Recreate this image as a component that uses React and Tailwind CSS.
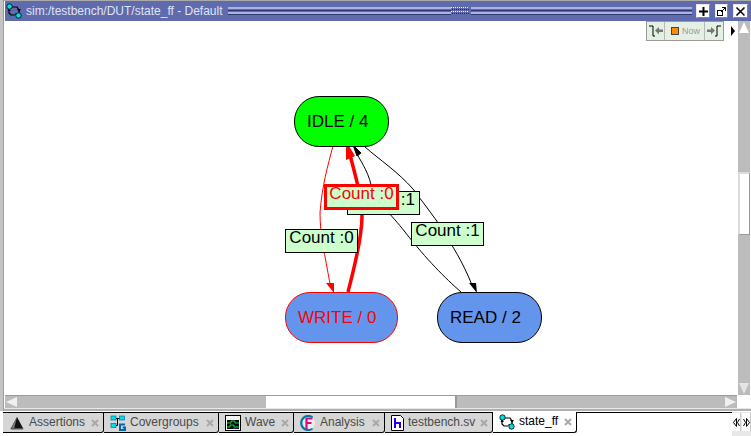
const F = { fontFamily: '"Liberation Sans", Arial, sans-serif' };

function StateIcon({ size = 16 }) {
  return (
    <svg width={size} height={size} viewBox="0 0 16 16" className="shrink-0">
      <path d="M5 4H11L13 7V11H9M3 6V10L5 12H9" fill="none" stroke="#000" strokeWidth="1.2" />
      <path d="M11 6L13 9L15 6ZM1.5 8L3 5.5L5 8Z" fill="#000" />
      <circle cx="3.5" cy="3.5" r="2.7" fill="#00e0e8" stroke="#000" strokeWidth="0.8" />
      <circle cx="12.5" cy="12.5" r="2.7" fill="#00e0e8" stroke="#000" strokeWidth="0.8" />
    </svg>
  );
}

function AssertIcon() {
  return (
    <svg width="16" height="16" viewBox="0 0 16 16" className="shrink-0">
      <path d="M8 2L14.5 14H1.5Z" fill="#111" />
      <path d="M8 2L5 14H1.5Z" fill="#777" />
      <path d="M2 13H14V14.5H2Z" fill="#555" />
    </svg>
  );
}

function CoverIcon() {
  return (
    <svg width="16" height="16" viewBox="0 0 16 16" className="shrink-0">
      <path d="M5 3.5H10M7.5 3.5V10.5H5" stroke="#000" fill="none" />
      <rect x="1" y="1" width="5" height="4" fill="#00e0e8" stroke="#0070a0" strokeWidth="0.7" />
      <rect x="9.5" y="1" width="5" height="4" fill="#00e0e8" stroke="#0070a0" strokeWidth="0.7" />
      <rect x="1" y="8.5" width="5" height="4" fill="#00e0e8" stroke="#0070a0" strokeWidth="0.7" />
      <path d="M15 9.5H10V15H15V12.5H12.7" fill="none" stroke="#0068a8" strokeWidth="2" />
    </svg>
  );
}

function WaveIcon() {
  return (
    <svg width="16" height="16" viewBox="0 0 16 16" className="shrink-0">
      <rect x="0.5" y="0.5" width="15" height="15" fill="#f4f4f4" stroke="#000" />
      <rect x="2" y="5" width="12" height="9" fill="#000" />
      <path d="M2 8H6V6H10V8H14" stroke="#00e050" fill="none" />
      <path d="M2 12H5V10H9V12H14" stroke="#00e050" fill="none" />
      <path d="M8 13H13" stroke="#4040ff" />
    </svg>
  );
}

function AnalysisIcon() {
  return (
    <svg width="16" height="16" viewBox="0 0 16 16" className="shrink-0">
      <path d="M12.5 2.5A7 7 0 1 0 12.5 13.5" fill="none" stroke="#0078a8" strokeWidth="2.2" />
      <circle cx="9" cy="8" r="6" fill="#fff" opacity="0.55" />
      <path d="M6.5 14V3.5H12.5M6.5 8H11.5" fill="none" stroke="#d0108a" strokeWidth="2.2" />
    </svg>
  );
}

function FileIcon() {
  return (
    <svg width="13" height="16" viewBox="0 0 13 16" className="shrink-0">
      <path d="M0.5 0.5H9.5L12.5 3.5V15.5H0.5Z" fill="#fff" stroke="#000" />
      <path d="M4 3V13M4 8H9V13" fill="none" stroke="#2000f0" strokeWidth="2" />
    </svg>
  );
}

function X() {
  return (
    <svg width="8" height="8" viewBox="0 0 8 8" className="shrink-0">
      <path d="M1 1L7 7M7 1L1 7" stroke="#a8a8a8" strokeWidth="2" />
    </svg>
  );
}

function WinBtn({ w, children }) {
  return (
    <div style={{ width: w }} className="h-[14px] bg-white border border-t-[#e8e8e8] border-l-[#e8e8e8] border-b-[#888] border-r-[#888] flex items-center justify-center shrink-0">
      {children}
    </div>
  );
}

function Grip({ className }) {
  return (
    <div className={"flex flex-col " + className}>
      <div className="h-[2px] bg-[#a9b3e8]" />
      <div className="h-px" />
      <div className="h-px bg-[#30386e]" />
      <div className="h-px" />
      <div className="h-[2px] bg-[#a9b3e8]" />
      <div className="h-px bg-[#30386e]" />
    </div>
  );
}

function Hatch() {
  const dots = [];
  for (let r = 0; r < 4; r++) {
    for (let c = 0; c < 9; c++) {
      dots.push(<rect key={r + "-" + c} x={c * 2 + (r % 2)} y={r * 2} width="1" height="1" fill={r % 2 ? "#20264e" : "#e8ecff"} />);
    }
  }
  return (
    <svg width="20" height="8" viewBox="0 0 20 8" className="shrink-0">{dots}</svg>
  );
}

function TitleBar() {
  return (
    <div className="h-[20px] mt-px ml-[5px] bg-[#5f6bac] flex items-center shrink-0">
      <div className="ml-[1px] mr-[4px]"><StateIcon /></div>
      <span className="text-[12px] leading-[18px] text-[#dfe3f5] whitespace-nowrap">sim:/testbench/DUT/state_ff - Default</span>
      <Grip className="ml-[5px] w-[223px] h-[8px]" />
      <Hatch />
      <Grip className="flex-1 h-[8px] mr-[4px]" />
      <div className="flex gap-[5px] mr-[3px] shrink-0">
        <WinBtn w={14}>
          <svg width="11" height="11" viewBox="0 0 11 11"><path d="M5.5 1V10M1 5.5H10" stroke="#000" strokeWidth="2" /></svg>
        </WinBtn>
        <WinBtn w={13}>
          <svg width="11" height="11" viewBox="0 0 11 11">
            <rect x="1.5" y="4.5" width="5" height="5" fill="none" stroke="#000" />
            <path d="M5 6L9.5 1.5M6 1.5H9.5V5" fill="none" stroke="#000" />
          </svg>
        </WinBtn>
        <WinBtn w={15}>
          <svg width="11" height="11" viewBox="0 0 11 11"><path d="M1.5 1.5L9.5 9.5M9.5 1.5L1.5 9.5" stroke="#000" strokeWidth="1.6" /></svg>
        </WinBtn>
      </div>
    </div>
  );
}

function Toolbar() {
  return (
    <div className="absolute top-[0px] right-[2px] flex items-center">
      <div className="flex h-[20px] w-[78px] border border-[#9a9a9a] bg-[#e4f0e4]">
        <div className="w-[18px] flex items-center justify-center border-r border-r-[#b8b8b8]">
          <svg width="16" height="14" viewBox="0 0 16 14">
            <path d="M1 2H5V12H7" fill="none" stroke="#000" />
            <path d="M7 6.5L11 3V5.5H15V8H11V10.5Z" fill="#777" />
          </svg>
        </div>
        <div className="flex-1 flex items-center pl-[6px] gap-[3px]">
          <div className="w-[6px] h-[6px] bg-[#ff8c00] border border-[#444] box-content" />
          <span className="text-[9px] leading-none text-[#9a9a9a]">Now</span>
        </div>
        <div className="w-[19px] flex items-center justify-center border-l border-l-[#b8b8b8]">
          <svg width="16" height="14" viewBox="0 0 16 14">
            <path d="M15 2H11V12H9" fill="none" stroke="#000" />
            <path d="M9 6.5L5 3V5.5H1V8H5V10.5Z" fill="#777" />
          </svg>
        </div>
      </div>
      <svg width="6" height="10" viewBox="0 0 6 10" className="ml-[6px]"><path d="M1 0L5 5L1 10Z" fill="#000" /></svg>
    </div>
  );
}

function Diagram() {
  return (
    <svg width="745" height="391" viewBox="0 0 745 391" className="absolute left-0 top-0">
      <g transform="translate(-5,-21)" fill="none">
        <path d="M333 146C328 165 322 185 320 213C320 235 325 255 330 284" stroke="#ff0000" strokeWidth="1" />
        <path d="M326 283L334 283L334 293Z" fill="#ff0000" />
        <path d="M348 292C353 272 362 240 362 216C362 200 358 185 350 155" stroke="#ff0000" strokeWidth="3.5" />
        <path d="M346 141L346 160L355 156Z" fill="#ff0000" />
        <path d="M461 292C445 278 427 260 405 232C392 215 375 200 372 190C370 175 362 163 357 154" stroke="#000" strokeWidth="1" />
        <path d="M353 145L361 153L357 156Z" fill="#000" stroke="#000" />
        <path d="M365 147C380 160 398 172 413 189C425 205 438 222 444 232C452 246 462 260 472 285" stroke="#000" strokeWidth="1" />
        <path d="M469 283L476 283L477 293Z" fill="#000" />
      </g>
    </svg>
  );
}

function Node({ x, y, w, bg, border, color, children }) {
  return (
    <div style={{ left: x - 5, top: y - 21, width: w }} className={`absolute h-[51px] rounded-[25px] border flex items-center pl-[12px] text-[17px] whitespace-nowrap ${bg} ${border} ${color}`}>
      {children}
    </div>
  );
}

function Label({ x, y, w, h, cls, children }) {
  return (
    <div style={{ left: x - 5, top: y - 21, width: w, height: h }} className={`absolute flex items-center justify-center bg-[#ccffcc] text-[17px] whitespace-nowrap pb-[6px] ${cls}`}>
      {children}
    </div>
  );
}

function VScroll() {
  return (
    <div className="w-[12px] shrink-0 flex flex-col bg-[#bcbcbc] mr-[1px]">
      <svg width="12" height="13" viewBox="0 0 12 13" className="shrink-0"><path d="M6 1L11 12H1Z" fill="#fff" /></svg>
      <div className="h-[138px]" />
      <div className="h-[63px] bg-white border border-[#dcdcdc] border-r-[#999] border-b-[#999] border-l-2 border-t-2" />
      <div className="flex-1" />
      <svg width="12" height="13" viewBox="0 0 12 13" className="shrink-0"><path d="M1 1H11L6 12Z" fill="#e4e4e4" /></svg>
    </div>
  );
}

function HScroll() {
  return (
    <div className="h-[13px] ml-[5px] mr-[14px] flex bg-[#bcbcbc] border-t border-t-[#9c9c9c] shrink-0">
      <svg width="13" height="12" viewBox="0 0 13 12" className="shrink-0"><path d="M1 6L12 1V11Z" fill="#f0f0f0" /></svg>
      <div className="w-[248px]" />
      <div className="w-[191px] bg-white border-r-2 border-r-[#999]" />
      <div className="flex-1" />
      <svg width="13" height="12" viewBox="0 0 13 12" className="shrink-0"><path d="M12 6L1 1V11Z" fill="#f0f0f0" /></svg>
    </div>
  );
}

function Tab({ w, icon, label, active }) {
  return (
    <div style={{ width: w }} className={`h-[21px] flex items-center shrink-0 border-r border-r-black border-b border-b-black rounded-br-[3px] pl-[6px] pr-[4px] gap-[4px] ${active ? "bg-white" : "bg-[#d6d6d6] border-t border-t-black"}`}>
      {icon}
      <span className={`text-[12px] leading-[14px] pb-[2px] whitespace-nowrap flex-1 ${active ? "text-black" : "text-[#4a4a4a]"}`}>{label}</span>
      <X />
    </div>
  );
}

function TabArrow({ children }) {
  return (
    <div className="w-[9px] h-[18px] bg-white border-r border-r-[#c8c8c8] flex items-center justify-center mr-px shrink-0">
      {children}
    </div>
  );
}

function Tabs() {
  return (
    <div className="flex items-start shrink-0 mt-px h-[24px] bg-white">
      <div className="w-[3px] shrink-0" />
      <Tab w={101} icon={<AssertIcon />} label="Assertions" />
      <Tab w={115} icon={<CoverIcon />} label="Covergroups" />
      <Tab w={75} icon={<WaveIcon />} label="Wave" />
      <Tab w={91} icon={<AnalysisIcon />} label="Analysis" />
      <Tab w={108} icon={<FileIcon />} label="testbench.sv" />
      <Tab w={84} icon={<StateIcon />} label="state_ff" active />
      <div className="flex-1 h-px bg-black" />
      <div className="w-[19px] h-[24px] flex items-start pt-px bg-[#e8e8e8] shrink-0">
        <TabArrow>
          <svg width="7" height="9" viewBox="0 0 7 9"><path d="M3.5 0.5L0.5 4.5L3.5 8.5ZM6.5 1L4.5 4.5L6.5 8" fill="none" stroke="#000" /></svg>
        </TabArrow>
        <TabArrow>
          <svg width="7" height="9" viewBox="0 0 7 9"><path d="M3.5 0.5L6.5 4.5L3.5 8.5ZM0.5 1L2.5 4.5L0.5 8" fill="none" stroke="#000" /></svg>
        </TabArrow>
      </div>
    </div>
  );
}

export default function App() {
  return (
    <div style={F} className="relative w-[751px] h-[436px] bg-white overflow-hidden flex flex-col">
      <div className="absolute left-0 top-0 w-full h-px bg-[#aaaaaa]" />
      <div className="absolute left-0 top-0 w-[4px] h-[411px] bg-[#c4c4c4] border-r border-r-[#9c9c9c]" />
      <TitleBar />
      <div className="flex-1 flex min-h-0 ml-[5px]">
        <div className="relative flex-1 bg-white">
          <Diagram />
          <Node x={294} y={96} w={95} bg="bg-[#00ff00]" border="border-black" color="text-black">IDLE / 4</Node>
          <Node x={285} y={292} w={113} bg="bg-[#6495ed]" border="border-[#ff0000]" color="text-[#ff0000]">WRITE / 0</Node>
          <Node x={437} y={292} w={105} bg="bg-[#6495ed]" border="border-black" color="text-black">READ / 2</Node>
          <Label x={347} y={191} w={73} h={24} cls="border border-black text-black justify-end pr-[4px]">:1</Label>
          <Label x={324} y={184} w={75} h={26} cls="border-[3px] border-[#ff0000] text-[#ff0000]">Count :0</Label>
          <Label x={285} y={229} w={73} h={24} cls="border border-black text-black">Count :0</Label>
          <Label x={411} y={222} w={73} h={24} cls="border border-black text-black">Count :1</Label>
          <Toolbar />
        </div>
        <VScroll />
      </div>
      <HScroll />
      <div className="h-px bg-[#e8e8e8] shrink-0" />
      <div className="h-[2px] bg-[#b0b0b0] shrink-0" />
      <Tabs />
    </div>
  );
}
